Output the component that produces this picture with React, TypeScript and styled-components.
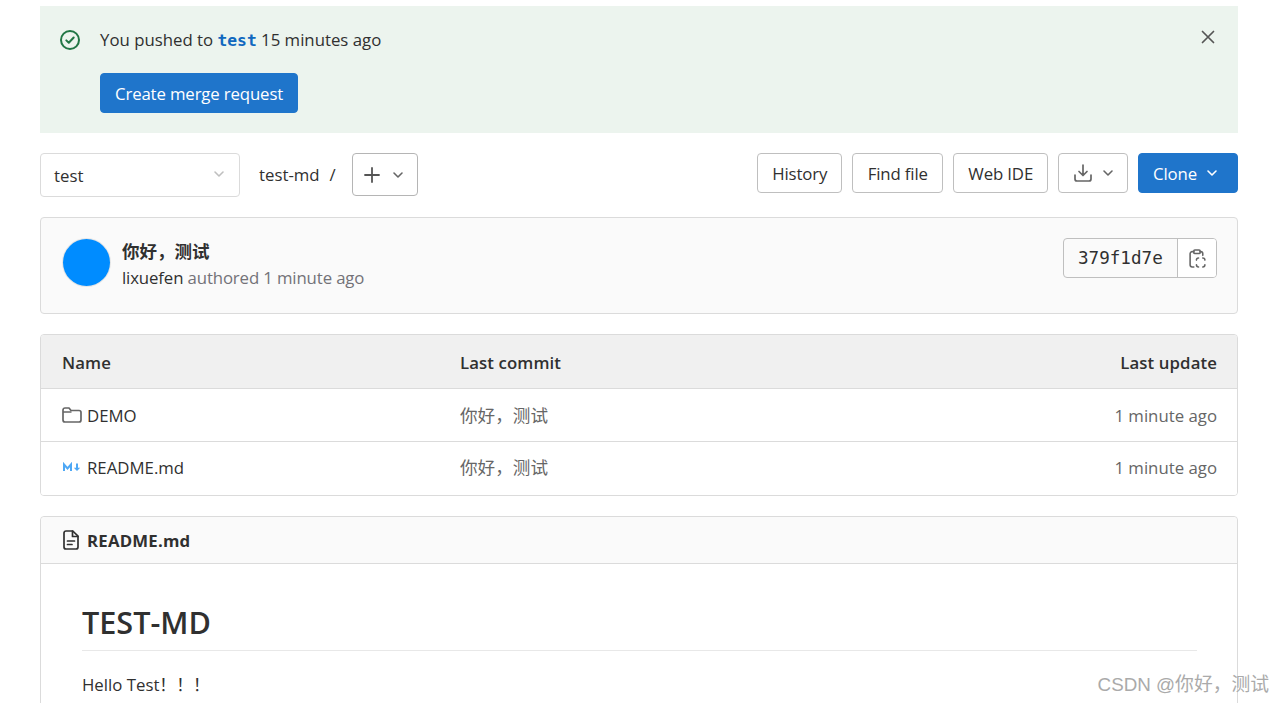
import styled, { createGlobalStyle } from 'styled-components'

const sans = `"Open Sans", "Noto Sans CJK SC", sans-serif`
const mono = `"DejaVu Sans Mono", "Liberation Mono", monospace`

const GlobalStyle = createGlobalStyle`
	html, body {
		margin: 0;
		height: 703px;
		overflow: hidden;
		background: #fff;
	}
	body {
		font-family: ${sans};
		font-size: 16.8px;
		color: #303030;
	}
`

const Page = styled.div`
	display: flex;
	flex-direction: column;
	width: 1198px;
	margin: 0 40px;
	padding-top: 6px;
`

const Banner = styled.div`
	display: flex;
	height: 127px;
	box-sizing: border-box;
	padding: 21px 20px 0 20px;
	background: #ecf4ee;
`

const BannerIcon = styled.div`
	width: 40px;
	height: 24px;
	flex: none;
	padding-top: 3px;
	color: #217645;
`

const BannerBody = styled.div`
	flex: 1;
	display: flex;
	flex-direction: column;
	align-items: flex-start;
	gap: 20px;
`

const BannerText = styled.div`
	height: 26px;
	line-height: 26px;
`

const BranchName = styled.code`
	font-family: ${mono};
	font-size: 16.3px;
	font-weight: 700;
	color: #1068bf;
`

const Close = styled.div`
	width: 20px;
	height: 20px;
	color: #555;
`

const Button = styled.div<{ $primary?: boolean }>`
	display: inline-flex;
	align-items: center;
	justify-content: center;
	gap: 8px;
	height: 40px;
	box-sizing: border-box;
	padding: 0 14px;
	letter-spacing: -0.14px;
	border-radius: 4px;
	white-space: nowrap;
	border: 1px solid ${({ $primary }) => ($primary ? '#1f75cb' : '#bfbfbf')};
	background: ${({ $primary }) => ($primary ? '#1f75cb' : '#fff')};
	color: ${({ $primary }) => ($primary ? '#fff' : '#303030')};
`

const Toolbar = styled.div`
	display: flex;
	align-items: flex-start;
	margin-top: 20px;
`

const BranchSelect = styled.div`
	display: flex;
	align-items: center;
	justify-content: space-between;
	width: 200px;
	height: 44px;
	box-sizing: border-box;
	padding: 0 12px 0 13px;
	border: 1px solid #dbdbdb;
	border-radius: 4px;
`

const SelectChevron = styled.span`
	display: flex;
	margin-bottom: 2px;
`

const Crumb = styled.div`
	display: flex;
	align-items: center;
	gap: 10px;
	height: 42px;
	margin-left: 19px;
	margin-right: 16px;
`

const PlusButton = styled(Button)`
	width: 66px;
	height: 43px;
	padding: 0;
	gap: 10px;
	border-color: #b5b5b5;
`

const FindFileButton = styled(Button)`
	padding: 0 14.5px;
`

const DownloadButton = styled(Button)`
	padding: 0 11px 0 15px;
`

const CloneButton = styled(Button)`
	padding: 0 17px 0 14px;
	gap: 7px;
`

const ToolbarRight = styled.div`
	display: flex;
	gap: 10px;
	margin-left: auto;
`

const Card = styled.div`
	margin-top: 20px;
	border: 1px solid #dbdbdb;
	border-radius: 4px;
	background: #fff;
`

const CommitCard = styled(Card)`
	display: flex;
	align-items: flex-start;
	height: 97px;
	box-sizing: border-box;
	padding: 20px 20px 0 22px;
	background: #fafafa;
`

const Avatar = styled.div`
	width: 47px;
	height: 47px;
	flex: none;
	margin-top: 1px;
	border-radius: 50%;
	background: #008cff;
	box-shadow: 0 0 0 1px #e6e6e6;
`

const CommitInfo = styled.div`
	flex: 1;
	margin: 1px 0 0 12px;
`

const CommitTitle = styled.div`
	height: 26px;
	line-height: 24px;
	font-size: 17.5px;
	font-weight: 700;
`

const CommitMeta = styled.div`
	height: 26px;
	line-height: 26px;
	letter-spacing: -0.13px;
	color: #737278;
`

const Author = styled.span`
	color: #303030;
`

const ShaGroup = styled.div`
	display: flex;
	height: 40px;
	box-sizing: border-box;
	border: 1px solid #bfbfbf;
	border-radius: 4px;
	overflow: hidden;
`

const Sha = styled.div`
	display: flex;
	align-items: center;
	width: 113px;
	box-sizing: border-box;
	padding-left: 14px;
	font-family: ${mono};
	font-size: 17.6px;
`

const ShaCopy = styled.div`
	display: flex;
	align-items: center;
	justify-content: center;
	width: 38px;
	border-left: 1px solid #bfbfbf;
	background: #fff;
`

const FileTable = styled(Card)`
	display: flex;
	flex-direction: column;
	overflow: hidden;
`

const Row = styled.div<{ $head?: boolean }>`
	display: grid;
	grid-template-columns: 398px 1fr 400px;
	align-items: center;
	height: ${({ $head }) => ($head ? 54 : 53)}px;
	box-sizing: border-box;
	padding: ${({ $head }) => ($head ? 2 : 0)}px 20px 0 21px;
	background: ${({ $head }) => ($head ? '#f0f0f0' : '#fff')};
	font-weight: ${({ $head }) => ($head ? 600 : 400)};
	border-bottom: 1px solid #dbdbdb;
	&:last-child {
		border-bottom: 0;
		padding-bottom: 3px;
	}
`

const NameCell = styled.div`
	display: flex;
	align-items: center;
	gap: 5px;
`

const CommitCell = styled.div`
	padding-bottom: 2px;
	font-size: 17.6px;
	color: #666;
`

const HeadCell = styled.div<{ $right?: boolean }>`
	letter-spacing: 0.1px;
	text-align: ${({ $right }) => ($right ? 'right' : 'left')};
`

const TimeCell = styled.div`
	text-align: right;
	color: #666;
`

const ReadmeHead = styled.div`
	display: flex;
	align-items: center;
	gap: 8px;
	height: 47px;
	box-sizing: border-box;
	padding: 0 20px 0 22px;
	background: #fafafa;
	border-bottom: 1px solid #dbdbdb;
	border-radius: 4px 4px 0 0;
	font-weight: 700;
	letter-spacing: 0.2px;
`

const ReadmeBody = styled.div`
	padding: 38px 40px 40px 41px;
`

const Heading = styled.h1`
	margin: 0;
	height: 48px;
	line-height: 40px;
	font-size: 30.6px;
	font-weight: 600;
	border-bottom: 1px solid #e8e8e8;
`

const Paragraph = styled.p`
	margin: 21px 0 0;
	line-height: 26px;
`

const Watermark = styled.div`
	position: absolute;
	right: 15px;
	top: 672px;
	font-family: "Liberation Sans", "Noto Sans CJK SC", sans-serif;
	font-size: 18.8px;
	line-height: 26px;
	color: #aaa;
	white-space: nowrap;
`

const Chevron = ({ color = '#666', size = 16 }: { color?: string; size?: number }) => (
	<svg width={size} height={size} viewBox="0 0 16 16" fill="none" stroke={color} strokeWidth="1.6" strokeLinecap="round" strokeLinejoin="round">
		<path d="M4 6l4 4 4-4" />
	</svg>
)

const CheckCircle = () => (
	<svg width="20" height="20" viewBox="0 0 20 20" fill="none" stroke="currentColor" strokeWidth="2" strokeLinecap="round" strokeLinejoin="round">
		<circle cx="10" cy="10" r="9" />
		<path d="M6.3 10.4l2.5 2.4 4.9-5.3" />
	</svg>
)

const CloseIcon = () => (
	<svg width="20" height="20" viewBox="0 0 20 20" fill="none" stroke="currentColor" strokeWidth="1.7" strokeLinecap="round">
		<path d="M4.5 4.5l11 11M15.5 4.5l-11 11" />
	</svg>
)

const PlusIcon = () => (
	<svg width="16" height="16" viewBox="0 0 16 16" fill="none" stroke="#555" strokeWidth="1.8" strokeLinecap="round">
		<path d="M8 1v14M1 8h14" />
	</svg>
)

const DownloadIcon = () => (
	<svg width="18" height="18" viewBox="0 0 18 18" fill="none" stroke="#666" strokeWidth="1.7" strokeLinecap="round" strokeLinejoin="round">
		<path d="M9 1v10M5 7.5L9 11.5l4-4" />
		<path d="M1 11v4a2 2 0 002 2h12a2 2 0 002-2v-4" />
	</svg>
)

const ClipboardIcon = () => (
	<svg width="17" height="19" viewBox="0 0 16 18" fill="none" stroke="#666" strokeWidth="1.5" strokeLinecap="round" strokeLinejoin="round">
		<path d="M4.5 2.5H3a2 2 0 00-2 2V15a2 2 0 002 2h1.5" />
		<rect x="4.5" y="1" width="6" height="3.2" rx="1" />
		<path d="M10.5 2.5H11a2 2 0 012 2V6" />
		<path d="M7 10.5a2 2 0 012-2M13 8.5a2 2 0 012 2M15 15a2 2 0 01-2 2M9 17a2 2 0 01-2-2" />
	</svg>
)

const FolderIcon = () => (
	<svg width="20" height="16" viewBox="0 0 20 16" fill="none" stroke="#666" strokeWidth="1.7" strokeLinejoin="round">
		<path d="M1 3a2 2 0 012-2h4l2 2.5h8a2 2 0 012 2V13a2 2 0 01-2 2H3a2 2 0 01-2-2V3z" />
		<path d="M1 5h8.5" />
	</svg>
)

const MarkdownIcon = () => (
	<svg width="20" height="16" viewBox="0 0 20 16" fill="none" stroke="#4ea8f5" strokeWidth="2">
		<path d="M2 12V5.5l3.5 4 3.5-4V12" />
		<path d="M15 4.5v5" />
		<path d="M11.8 8.8h6.4L15 12z" fill="#4ea8f5" stroke="none" />
	</svg>
)

const DocIcon = () => (
	<svg width="16" height="20" viewBox="0 0 16 20" fill="none" stroke="#303030" strokeWidth="1.7" strokeLinejoin="round" strokeLinecap="round">
		<path d="M2.8 1h7L15 6.2V17a2 2 0 01-2 2H3a2 2 0 01-2-2V3a2 2 0 012-2z" />
		<path d="M9.5 1v5.5H15" />
		<path d="M4.5 11h7M4.5 14.5h4.5" />
	</svg>
)

const files = [
	{ name: 'DEMO', icon: <FolderIcon /> },
	{ name: 'README.md', icon: <MarkdownIcon /> }
]

export default function App() {
	return (
		<>
			<GlobalStyle />
			<Page>
				<Banner>
					<BannerIcon><CheckCircle /></BannerIcon>
					<BannerBody>
						<BannerText>You pushed to <BranchName>test</BranchName> 15 minutes ago</BannerText>
						<Button $primary>Create merge request</Button>
					</BannerBody>
					<Close><CloseIcon /></Close>
				</Banner>

				<Toolbar>
					<BranchSelect>
						test
						<SelectChevron><Chevron color="#bfbfbf" /></SelectChevron>
					</BranchSelect>
					<Crumb>
						<span>test-md</span>
						<span>/</span>
					</Crumb>
					<PlusButton>
						<PlusIcon />
						<Chevron />
					</PlusButton>
					<ToolbarRight>
						<Button>History</Button>
						<FindFileButton>Find file</FindFileButton>
						<Button>Web IDE</Button>
						<DownloadButton><DownloadIcon /><Chevron /></DownloadButton>
						<CloneButton $primary>Clone<Chevron color="#fff" /></CloneButton>
					</ToolbarRight>
				</Toolbar>

				<CommitCard>
					<Avatar />
					<CommitInfo>
						<CommitTitle>你好，测试</CommitTitle>
						<CommitMeta><Author>lixuefen</Author> authored 1 minute ago</CommitMeta>
					</CommitInfo>
					<ShaGroup>
						<Sha>379f1d7e</Sha>
						<ShaCopy><ClipboardIcon /></ShaCopy>
					</ShaGroup>
				</CommitCard>

				<FileTable>
					<Row $head>
						<HeadCell>Name</HeadCell>
						<HeadCell>Last commit</HeadCell>
						<HeadCell $right>Last update</HeadCell>
					</Row>
					{files.map(file => (
						<Row key={file.name}>
							<NameCell>{file.icon}{file.name}</NameCell>
							<CommitCell>你好，测试</CommitCell>
							<TimeCell>1 minute ago</TimeCell>
						</Row>
					))}
				</FileTable>

				<Card>
					<ReadmeHead><DocIcon />README.md</ReadmeHead>
					<ReadmeBody>
						<Heading>TEST-MD</Heading>
						<Paragraph>Hello Test！！！</Paragraph>
					</ReadmeBody>
				</Card>
			</Page>
			<Watermark>CSDN @你好，测试</Watermark>
		</>
	)
}
